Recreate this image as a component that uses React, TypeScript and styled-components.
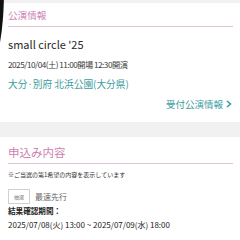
import styled, { createGlobalStyle } from "styled-components";

const GlobalStyle = createGlobalStyle`
  html, body {
    margin: 0;
    padding: 0;
    background: #f1f1f1;
    font-family: "Noto Sans CJK JP", "Noto Sans", sans-serif;
    color: #333;
  }
`;

const Page = styled.div`
  position: relative;
  width: 240px;
  height: 240px;
  overflow: hidden;
  background: #f1f1f1;
  padding-top: 3px;
  box-sizing: border-box;
`;

// dark rounded screen edge on the left
const Bezel = styled.div`
  position: absolute;
  left: -20px;
  top: -10px;
  width: 24px;
  height: 76px;
  background: #111;
  border-radius: 0 0 60% 0 / 0 0 100% 0;
`;

const Card = styled.section<{ $bottomPad: number }>`
  background: #fff;
  padding: 0 7px ${({ $bottomPad }) => $bottomPad}px 8px;
  margin-bottom: 15px;
`;

const SectionTitle = styled.h2<{ $size: number; $top: number }>`
  margin: 0;
  padding: ${({ $top }) => $top}px 0 4px;
  font-size: ${({ $size }) => $size}px;
  font-weight: 400;
  line-height: 14px;
  color: #cd7fb3;
  border-bottom: 1.5px solid #e0c3d7;
`;

const EventName = styled.div`
  margin-top: 9px;
  font-size: 11px;
  line-height: 16px;
  color: #2a2a2a;
`;

const DateLine = styled.div`
  margin-top: 5px;
  font-size: 8.2px;
  line-height: 14px;
  letter-spacing: -0.5px;
  color: #3a3a3a;
`;

const Venue = styled.div`
  margin-top: 6px;
  font-size: 9.7px;
  line-height: 14px;
  color: #3b9c9e;
`;

const MoreLink = styled.a`
  display: flex;
  justify-content: flex-end;
  align-items: center;
  gap: 3px;
  margin-top: 6px;
  padding-right: 1px;
  font-size: 9.5px;
  line-height: 14px;
  color: #3b9c9e;
  text-decoration: none;
`;

const Note = styled.div`
  margin-top: 6px;
  font-size: 6px;
  line-height: 10px;
  color: #333;
`;

const MethodRow = styled.div`
  display: flex;
  align-items: center;
  gap: 5px;
  margin-top: 9px;
`;

const Badge = styled.span`
  display: inline-flex;
  align-items: center;
  justify-content: center;
  width: 20px;
  height: 13px;
  border: 1px solid #d0d0d0;
  font-size: 5px;
  color: #777;
`;

const Method = styled.span`
  font-size: 8px;
  color: #666;
`;

const PeriodLabel = styled.div`
  margin-top: 1px;
  font-size: 7.6px;
  line-height: 12px;
  font-weight: 700;
  color: #222;
`;

const PeriodValue = styled.div`
  margin-top: 2px;
  font-size: 8px;
  line-height: 12px;
  color: #222;
`;

export default function App() {
  return (
    <Page>
      <GlobalStyle />
      <Card $bottomPad={11}>
        <SectionTitle $size={9.6} $top={5}>公演情報</SectionTitle>
        <EventName>small circle '25</EventName>
        <DateLine>2025/10/04(土) 11:00開場 12:30開演</DateLine>
        <Venue>大分·別府 北浜公園(大分県)</Venue>
        <MoreLink href="#">
          受付公演情報
          <svg width="6" height="8" viewBox="0 0 6 8">
            <path d="M1 1 L4.5 4 L1 7" fill="none" stroke="#3b9c9e" strokeWidth="1.6" />
          </svg>
        </MoreLink>
      </Card>
      <Card $bottomPad={20}>
        <SectionTitle $size={11.5} $top={8}>申込み内容</SectionTitle>
        <Note>※ご当選の第1希望の内容を表示しています</Note>
        <MethodRow>
          <Badge>抽選</Badge>
          <Method>最速先行</Method>
        </MethodRow>
        <PeriodLabel>結果確認期間：</PeriodLabel>
        <PeriodValue>2025/07/08(火) 13:00 ~ 2025/07/09(水) 18:00</PeriodValue>
      </Card>
      <Bezel />
    </Page>
  );
}
